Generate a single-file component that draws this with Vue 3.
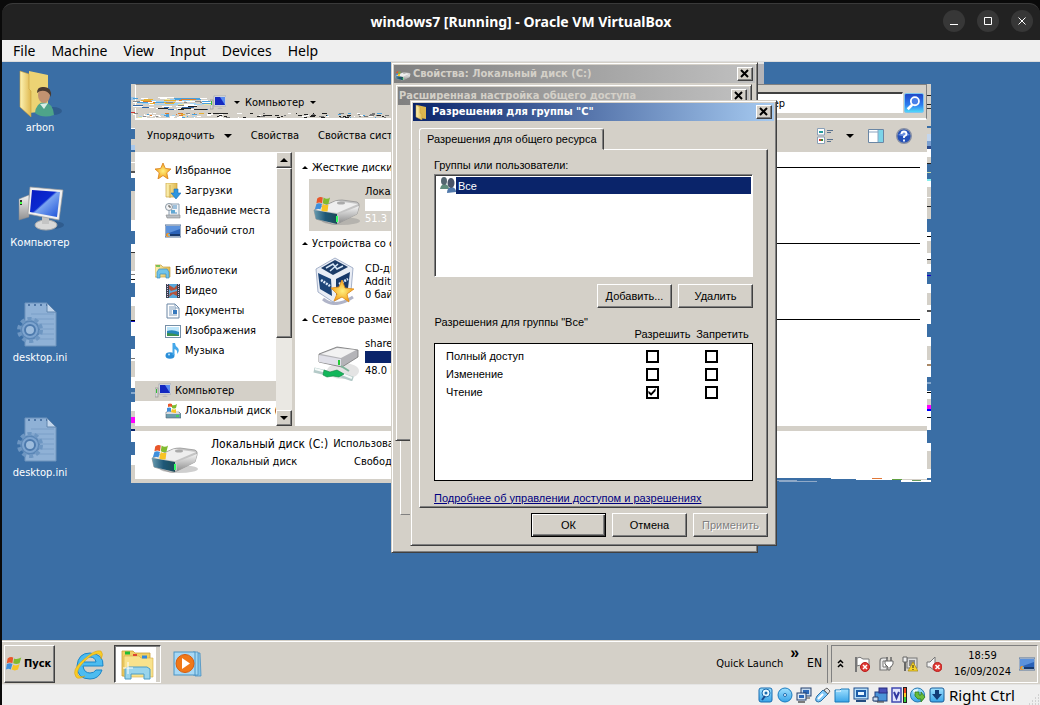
<script setup>
import { ref } from 'vue'

const menus = ['File', 'Machine', 'View', 'Input', 'Devices', 'Help']

const shortcuts = [
  { icon: 'user-folder', label: 'arbon' },
  { icon: 'computer', label: 'Компьютер' },
  { icon: 'ini', label: 'desktop.ini' },
  { icon: 'ini', label: 'desktop.ini' },
]

const nav = [
  { title: 'Избранное', icon: 'star', items: [
    { icon: 'downloads', label: 'Загрузки' },
    { icon: 'recent', label: 'Недавние места' },
    { icon: 'desk', label: 'Рабочий стол' },
  ] },
  { title: 'Библиотеки', icon: 'library', items: [
    { icon: 'video', label: 'Видео' },
    { icon: 'doc', label: 'Документы' },
    { icon: 'image', label: 'Изображения' },
    { icon: 'music', label: 'Музыка' },
  ] },
  { title: 'Компьютер', icon: 'pc-small', active: true, items: [
    { icon: 'drive-small', label: 'Локальный диск (' },
  ] },
]

const groups = [
  { title: 'Жесткие диски', icon: 'drive-win', selected: true, name: 'Локальный диск', bar: 'empty', info: '51.3 ГБ' },
  { title: 'Устройства со съемными носителями', icon: 'vbox', name: 'CD-дисковод', extra: 'Additions', info: '0 байт' },
  { title: 'Сетевое размещение', icon: 'drive-net', name: 'share', bar: 'full', info: '48.0 ГБ' },
]

const permissions = ref([
  { name: 'Полный доступ', allow: false, deny: false },
  { name: 'Изменение', allow: false, deny: false },
  { name: 'Чтение', allow: true, deny: false },
])

const indicators = ['hdd', 'cd', 'net', 'usb', 'shared', 'display', 'record', 'cpu', 'mouse', 'key']
const tray = ['flag', 'plug', 'network', 'sound']

// Repaint artefacts along the window edges: [top, height, colour]
const G = '#d4d0c8'
const W = '#fff'
const B = '#3a6ea5'
const leftEdge = [
  [0, 13, G], [13, 3, '#9cc4e4'], [16, 12, G], [28, 1, '#c33'], [29, 15, G], [44, 1, W], [45, 10, B], [55, 6, G], [61, 5, '#a8c8ec'],
  [66, 2, B], [68, 10, G], [78, 1, W], [79, 8, G], [87, 2, '#555'], [89, 5, W], [94, 13, B], [107, 29, G], [136, 11, W], [147, 13, B],
  [160, 8, W], [168, 1, '#333'], [169, 18, G], [187, 3, W], [190, 1, '#777'], [191, 4, W], [195, 1, '#111'], [196, 3, W],
  [199, 14, B], [213, 9, W], [222, 14, G], [236, 1, '#000'], [237, 1, '#1010c0'], [238, 14, W], [252, 13, B], [265, 9, W],
  [274, 1, '#777'], [275, 2, W], [277, 16, G], [293, 11, W], [304, 4, B], [308, 2, '#86a8cc'], [310, 8, B], [318, 9, W], [327, 6, G],
  [333, 6, '#f0f'], [339, 6, G], [345, 2, '#0a246a'], [347, 11, W], [358, 13, B], [371, 10, W], [381, 18, G],
]
const rightEdge = [
  [0, 11, G], [11, 1, '#222'], [12, 8, G], [20, 1, '#222'], [21, 3, G], [24, 1, '#333'], [25, 17, G], [42, 2, B], [44, 6, G],
  [50, 7, '#c3d6ee'], [57, 5, '#7a9fd0'], [62, 3, '#2a4a8c'], [65, 8, W], [73, 6, G], [79, 1, '#222'], [80, 8, B], [88, 1, '#cda'],
  [89, 6, B], [95, 2, '#8ee'], [97, 6, W], [103, 10, G], [113, 1, W], [114, 8, G], [122, 1, '#222'], [123, 12, G], [135, 13, B],
  [148, 4, W], [152, 1, '#000'], [153, 4, W], [157, 12, G], [169, 6, W], [175, 1, '#222'], [176, 4, G], [180, 8, W], [188, 3, B],
  [191, 1, '#10c'], [192, 8, B], [200, 9, W], [209, 12, G], [221, 5, W], [226, 2, '#555'], [228, 12, W], [240, 13, B],
  [253, 9, W], [262, 14, G], [276, 4, W], [280, 2, '#a86'], [282, 11, W], [293, 5, B], [298, 2, '#86a8cc'], [300, 7, B], [307, 1, W],
  [308, 1, '#000'], [309, 6, W], [315, 6, G], [321, 4, '#f0f'], [325, 2, '#00f'], [327, 6, W], [333, 1, '#000'], [334, 12, W],
  [346, 13, B], [359, 8, W], [367, 2, G], [369, 16, G], [385, 14, W],
]

// Torn scan lines over the address bar
const palette = ['#ffffff', '#4aa0dc', '#9fd2f2', '#ffffff', '#e8b030', '#d4d0c8', '#9fd2f2', '#ffffff', '#e07c28', '#8a8a8a', '#ffffff', '#f0e8a0']
let seed = 11
const rnd = (n) => {
  seed = (seed * 1103515245 + 12345) % 2147483648
  return Math.floor(seed / 65536) % n
}
const torn = []
for (let y = 13; y < 25; y += 1) {
  let x = 0
  while (x < 74) {
    const w = 2 + rnd(11)
    const c = y > 20 ? ['#222', G, '#2f66a8', '#fff'][rnd(4)] : palette[rnd(12)]
    if (rnd(5) > 0) torn.push({ x, y: y + Math.floor(x / 34), w: Math.min(w, 78 - x), c })
    x += w
  }
}
for (let y = 29; y < 34; y += 1) {
  let x = 0
  while (x < 254) {
    const w = 1 + rnd(5)
    const c = x < 70 ? palette[rnd(12)] : ['#222', '#fff', G, '#777', x > 190 ? '#4aa0dc' : '#222', G][rnd(6)]
    if (rnd(3) > 0) torn.push({ x, y, w, c })
    x += w + rnd(5)
  }
}
</script>

<template>
  <svg class="defs" aria-hidden="true">
    <defs>
      <linearGradient id="gFolder" x1="0" x2="1"><stop offset="0" stop-color="#fdf3b4" /><stop offset="1" stop-color="#dfb84f" /></linearGradient>
      <linearGradient id="gScreen" x1="0" y1="0" x2="1" y2="1"><stop offset="0" stop-color="#0a1cc0" /><stop offset=".45" stop-color="#0a2ad0" /><stop offset=".5" stop-color="#7aa4f0" /><stop offset="1" stop-color="#1a50d8" /></linearGradient>
      <linearGradient id="gMetal" x1="0" y1="0" x2="0" y2="1"><stop offset="0" stop-color="#f4f4f4" /><stop offset="1" stop-color="#909090" /></linearGradient>
      <linearGradient id="gSky" x1="0" y1="0" x2="0" y2="1"><stop offset="0" stop-color="#9fe0ff" /><stop offset="1" stop-color="#38a4e8" /></linearGradient>
      <linearGradient id="gTeal" x1="0" x2="1"><stop offset="0" stop-color="#6a9cb0" /><stop offset=".5" stop-color="#1f5878" /><stop offset="1" stop-color="#1c4c58" /></linearGradient>
      <radialGradient id="gStar"><stop offset="0" stop-color="#fff080" /><stop offset="1" stop-color="#f4a018" /></radialGradient>
    </defs>
    <symbol id="winflag" viewBox="0 0 20 20">
      <path d="M2 3Q6 0 9 2L8 9Q5 7 1 9Z" fill="#e8562a" /><path d="M10 3Q14 5 19 2L17 9Q13 11 9 9Z" fill="#80bb30" />
      <path d="M1 10Q5 8 8 10L6 17Q3 15 0 17Z" fill="#3f8fdc" /><path d="M9 11Q13 13 17 10L15 17Q11 19 7 17Z" fill="#f8c424" />
    </symbol>
    <symbol id="user-folder" viewBox="0 0 48 48">
      <ellipse cx="37" cy="42" rx="9" ry="4" fill="#234a78" opacity=".5" />
      <path d="M13 2L32 6V42L13 44Z" fill="#ecd374" /><path d="M4 2L13 5V20L15 22V48L4 38Z" fill="url(#gFolder)" stroke="#c8a040" stroke-width=".6" />
      <path d="M19 44Q20 34 28 33Q37 34 38 46Q27 50 19 44Z" fill="#4ea489" /><path d="M24 35L28 40L32 34" fill="#d8efe6" />
      <ellipse cx="28" cy="26" rx="6" ry="8" fill="#c29270" /><path d="M21 24Q21 17 28 18Q36 18 35 28Q33 23 29 22Q24 21 21 24Z" fill="#4a3a30" />
    </symbol>
    <symbol id="computer" viewBox="0 0 48 48">
      <ellipse cx="36" cy="41" rx="12" ry="4" fill="#234a78" opacity=".5" />
      <path d="M3 15L13 11V33L3 36Z" fill="url(#gMetal)" stroke="#888" stroke-width=".5" /><rect x="4" y="16" width="2" height="5" fill="#333" /><rect x="4" y="18" width="2" height="2" fill="#4f4" />
      <ellipse cx="30" cy="41" rx="11" ry="5" fill="#d8d8d8" stroke="#aaa" /><path d="M26 31H33V40H26Z" fill="#c4c4c4" />
      <path d="M14 3L47 6L43 36L12 30Z" fill="#f0f0f0" stroke="#999" stroke-width=".7" /><path d="M16 6L44 8L41 33L14 28Z" fill="url(#gScreen)" />
    </symbol>
    <symbol id="ini" viewBox="0 0 48 48">
      <path d="M9 4H31L40 13V47H9Z" fill="#8fb1d6" stroke="#6f94bd" /><path d="M31 4V13H40Z" fill="#c2d6ec" stroke="#5f84ad" />
      <path d="M15 15H38M15 20H38M15 25H38M15 30H38M15 35H38M15 40H38" stroke="#7a9fc8" /><path d="M12 6H31" stroke="#4e76a6" stroke-width="2" stroke-dasharray="2 4" />
      <circle cx="14" cy="31" r="9" fill="#7da4cf" stroke="#5a86b6" stroke-width="2" /><circle cx="14" cy="31" r="11" fill="none" stroke="#6d96c2" stroke-width="4" stroke-dasharray="4 3" />
      <circle cx="14" cy="31" r="5" fill="#9dbcdd" stroke="#4d7aad" stroke-width="2" />
    </symbol>
    <symbol id="star" viewBox="0 0 16 16"><path d="M8 0L10.3 5.4L16 6L11.8 9.8L13 16L8 12.5L3 16L4.2 9.8L0 6L5.7 5.4Z" fill="url(#gStar)" stroke="#d8801c" stroke-width=".8" /></symbol>
    <symbol id="downloads" viewBox="0 0 16 16"><path d="M1 0H12V14H1Z" fill="url(#gFolder)" stroke="#c8a040" stroke-width=".7" /><path d="M5 2V15" stroke="#cda84a" /><path d="M9 6H13V10H16L11 16L6 10H9Z" fill="#2d96e0" stroke="#1c70b8" stroke-width=".6" /></symbol>
    <symbol id="recent" viewBox="0 0 16 16"><path d="M4 1H14V13H4Z" fill="#f2f5f8" stroke="#8ca0b2" /><path d="M1 12H15V15H2Z" fill="#b8bec4" stroke="#888" stroke-width=".6" /><path d="M8 3H12M8 5H12M6 10H12" stroke="#4a8cc0" /><rect x="6" y="7" width="4" height="3" fill="#5fa8d4" /><circle cx="4" cy="4" r="3.5" fill="#f4f4f4" stroke="#8a98a4" /><path d="M4 2V4H6" stroke="#555" fill="none" /></symbol>
    <symbol id="desk" viewBox="0 0 16 16"><rect y="2" width="16" height="12" fill="#e0e6ee" stroke="#56749c" /><rect x="1" y="3" width="14" height="10" fill="#2a62b8" /><path d="M1 3H15V6L1 11Z" fill="#5c92dc" /><rect x="1" y="11" width="14" height="2" fill="#17396e" /><circle cx="3" cy="12" r="2" fill="#f39a2c" /><circle cx="4" cy="12" r="1" fill="#5cb8ff" /></symbol>
    <symbol id="library" viewBox="0 0 16 16"><path d="M0 2H6L8 4H15V14H0Z" fill="url(#gFolder)" stroke="#c8a040" stroke-width=".7" /><path d="M1 3H5" stroke="#5b4" stroke-width="1.5" /><path d="M2 9L4 6H12L14 9V15H11V11H5V15H2Z" fill="#71c3ea" stroke="#3c8dbc" stroke-width=".7" /></symbol>
    <symbol id="video" viewBox="0 0 16 16"><rect x="1" y="1" width="14" height="14" fill="#3a4450" /><rect x="4" y="1" width="8" height="14" fill="#58a8dc" /><path d="M4 2L9 5L12 2V6L6 8L4 6ZM5 10L12 8V13L8 11L4 14Z" fill="#b4533c" /><path d="M2.5 1V15M13.5 1V15" stroke="#dbe" stroke-dasharray="1 1" /></symbol>
    <symbol id="doc" viewBox="0 0 16 16"><path d="M2 1H10L14 5V15H2Z" fill="#fff" stroke="#6a86a4" /><path d="M10 1V5H14M4 4H9M4 6H11M4 8H7M4 10H7M4 12H12" stroke="#7e9cba" fill="none" /><rect x="8" y="7" width="4" height="4" fill="#3679bd" /></symbol>
    <symbol id="image" viewBox="0 0 16 16"><rect x=".5" y="2.5" width="15" height="12" fill="#fff" stroke="#7690a8" /><rect x="2" y="4" width="12" height="9" fill="#bfe6fa" /><path d="M2 8Q8 6 14 9V13H2Z" fill="#2686bc" /><path d="M2 10Q7 10 14 12V13H2Z" fill="#3d9250" /></symbol>
    <symbol id="music" viewBox="0 0 16 16"><ellipse cx="5" cy="12.5" rx="4.5" ry="3.3" fill="#2a8ed8" /><path d="M7.500 12V0H10Q10 3 13 5Q15 8 12 11Q13 7 9.500 6V12Z" fill="#45a8ea" /><circle cx="4" cy="11.500" r="1" fill="#bfe4fa" /></symbol>
    <symbol id="pc-small" viewBox="0 0 16 16"><rect y="5" width="3" height="9" fill="#d8d8d8" stroke="#888" stroke-width=".6" /><rect x="1" y="6" width="1" height="4" fill="#3b3" /><rect x="4" y="1" width="12" height="10" fill="#e8eaee" stroke="#9098a4" stroke-width=".6" /><rect x="5" y="2" width="10" height="8" fill="#1428c0" /><path d="M10 2H15V10Z" fill="#5a8cf0" /><path d="M7 14Q10 11 13 14Z" fill="#b8b8b8" /></symbol>
    <symbol id="drive-small" viewBox="0 0 16 16"><path d="M1 9H14L16 11V15H1Z" fill="#6c9cac" stroke="#567" stroke-width=".6" /><path d="M2 8H13L15 11H1Z" fill="#dcdcdc" /><rect x="11" y="12" width="3" height="2" fill="#4c6" /><path d="M3 1Q5 0 7 1V4Q5 3 3 4Z" fill="#e8562a" /><path d="M7 2Q9 3 12 1L11 5Q9 6 7 5Z" fill="#80bb30" /><path d="M2 5Q4 4 6 5V9Q4 8 2 9Z" fill="#3f8fdc" /><path d="M7 6Q9 7 11 6V10Q9 10 6 9Z" fill="#f8c424" /></symbol>
    <symbol id="drive-win" viewBox="0 0 48 48">
      <ellipse cx="28" cy="40" rx="19" ry="4" fill="#888" opacity=".4" />
      <path d="M1 29L22 20Q25 19 29 19L44 21Q47 22 46 26L44 33L26 42Q23 44 19 43L3 38Z" fill="#c4c4c4" stroke="#8c8c8c" stroke-width=".7" />
      <path d="M3 29L23 20L45 23L24 32Z" fill="#eeeeee" /><path d="M1 29L24 33V43L3 38Z" fill="url(#gTeal)" /><path d="M26 33L46 25L44 33L26 42Z" fill="url(#gMetal)" />
      <rect x="23" y="35" width="2" height="6" fill="#3f6" /><ellipse cx="28" cy="22" rx="4" ry="1.500" fill="#aaa" />
      <g transform="translate(1 7) scale(.8)"><path d="M4 13Q8 10 11 12L10 19Q7 17 3 19Z" fill="#e8562a" /><path d="M12 12Q16 15 20 12L18 20Q14 21 11 19Z" fill="#80bb30" /><path d="M3 20Q6 18 10 20L8 27Q5 25 1 27Z" fill="#3f8fdc" /><path d="M11 20Q14 22 18 21L17 29Q12 30 9 28Z" fill="#f8c424" /></g>
    </symbol>
    <symbol id="drive-net" viewBox="0 0 48 48">
      <ellipse cx="30" cy="38" rx="16" ry="8" fill="#e4e4e4" /><path d="M6 21L24 14L45 17V24L29 34L6 29Z" fill="#b4b4b8" stroke="#777" stroke-width=".8" /><path d="M8 21L24 15L43 17L28 25Z" fill="#f2f2f2" /><path d="M6 22L28 26V33L6 29Z" fill="#e0e0e8" /><rect x="25" y="27" width="2" height="5" fill="#2c3" />
      <path d="M28 33L36 38" stroke="#7eb49a" stroke-width="2" /><path d="M1 37L14 40M28 42L40 46" stroke="#b4cac8" stroke-width="5" /><path d="M2 36L14 39M29 41L39 45" stroke="#f6fbfa" stroke-width="2" /><path d="M11 37L17 39L24 37L31 41L26 44L20 43L14 44L10 42Z" fill="#12b65a" stroke="#0b8440" stroke-width=".6" />
    </symbol>
    <symbol id="vbox" viewBox="0 0 48 48">
      <path d="M10 42Q22 52 40 40" fill="none" stroke="#b0b4c8" stroke-width="3" />
      <path d="M3 12L22 1L40 11L38 34L20 45L5 35Z" fill="#e9edf5" stroke="#90a0bc" stroke-width=".8" />
      <path d="M8 11L22 3L35 10L20 18Z" fill="#1c3c68" /><path d="M5 16L18 22L19 39L7 32Z" fill="#1c4478" /><path d="M23 22L37 15L35 31L23 38Z" fill="#17396a" />
      <path d="M13 11L20 7L24 12L30 9M17 14L25 7" fill="none" stroke="#d6e6f6" stroke-width="1.500" /><path d="M8 23L17 29M26 27L35 22" stroke="#dde9f8" stroke-width="2.500" stroke-dasharray="2 1" />
      <path d="M29 23L32 31L41 32L34 37L36 45L29 40L21 44L24 37L18 31L26 30Z" fill="url(#gStar)" stroke="#e08c1c" stroke-width=".8" />
    </symbol>
    <symbol id="folder" viewBox="0 0 16 16"><path d="M3 1L12 3V15L6 14Z" fill="#ddb64e" /><path d="M2 1L6 3V9L8 10V16L2 13Z" fill="url(#gFolder)" stroke="#c8a040" stroke-width=".5" /></symbol>
    <symbol id="users" viewBox="0 0 16 16"><path d="M0 12Q1 7 5 7Q9 8 9 12Z" fill="#5f8c7c" /><ellipse cx="4" cy="4" rx="3" ry="4" fill="#536670" /><path d="M7 16Q7 10 12 10Q16 11 16 15Z" fill="#5078aa" /><ellipse cx="11" cy="6" rx="3.500" ry="5" fill="#485468" /></symbol>
    <symbol id="view" viewBox="0 0 16 16"><path d="M.5.5H7.500V7H.5ZM.5 9H7.500V15.500H.5Z" fill="#fff" stroke="#8aa0b8" /><rect x="2" y="3" width="4" height="2" fill="#249c9c" /><rect x="2" y="11" width="2" height="2" fill="#d33" /><rect x="4" y="11" width="2" height="2" fill="#383" /><path d="M10 2.500H16M10 4.500H14M10 11.500H16M10 13.500H14" stroke="#5a728e" /></symbol>
    <symbol id="pane" viewBox="0 0 16 16"><path d="M.5 1.500H15.500V14.500H.5Z" fill="#fff" stroke="#6a86a4" /><rect x="10" y="2" width="5" height="12" fill="#7cd4e8" /><path d="M10 2V14M1 4H10" stroke="#8aa4c0" /></symbol>
    <symbol id="help" viewBox="0 0 16 16"><circle cx="8" cy="8" r="7.300" fill="#2450b8" stroke="#8890a4" stroke-width="1.400" /><path d="M2 7Q8 1 14 7Q8 9 2 7Z" fill="#6c90e0" /><path d="M5.500 6Q5.500 3.500 8 3.500Q10.500 3.500 10.500 6Q10.500 7.500 8 8.500V10M8 11.500V13.500" fill="none" stroke="#fff" stroke-width="1.800" /></symbol>
    <symbol id="ie" viewBox="0 0 32 32"><path d="M30 18H10Q11 25 17 25Q21 25 23 22H29Q26 31 17 31Q4 31 4 18Q5 5 17 5Q31 6 30 18ZM11 14H23Q22 9 17 9Q12 9 11 14Z" fill="#4cbcf0" stroke="#1b86c8" /><path d="M3 29Q-2 22 10 12Q22 1 28 3Q31 6 28 11Q28 5 23 6Q17 7 9 16Q3 23 5 27Q7 30 12 28Q5 32 3 29Z" fill="#f8cc24" stroke="#d89c10" stroke-width=".5" /></symbol>
    <symbol id="explorer" viewBox="0 0 36 32"><path d="M2 3H13L15 5H30V28H2Z" fill="#f0cf64" stroke="#caa038" stroke-width=".8" /><path d="M5 5H10" stroke="#2b3" stroke-width="3" /><path d="M4 8H19L21 10H33V29H4Z" fill="#f8e28c" stroke="#d4ac48" stroke-width=".6" /><path d="M13 7H17" stroke="#d43" stroke-width="2" /><path d="M22 9H27" stroke="#38d" stroke-width="3" /><path d="M5 31V21L8 19H27L30 21V31H24V26H11V31H5Z" fill="#98d4ec" stroke="#4c9cc4" /><path d="M8 14V26M3 20H13" stroke="#fff" /></symbol>
    <symbol id="wmp" viewBox="0 0 32 28"><path d="M23 3H27L28 26H22Z" fill="#84c4e8" stroke="#4b90c0" stroke-width=".8" /><path d="M20 2H25V25H20Z" fill="#a4d8f2" stroke="#4b90c0" stroke-width=".8" /><rect x="1" y="2" width="21" height="23" fill="#a8d8f4" stroke="#4b94c4" /><circle cx="12" cy="13.500" r="9" fill="#f07818" stroke="#d85c0c" /><path d="M9 8L17 13.500L9 19Z" fill="#fff" /></symbol>
    <symbol id="flag" viewBox="0 0 16 16"><path d="M2 1V16" stroke="#777" stroke-width="2" /><path d="M3 2Q6 0 9 3H15V11H8Q5 8 3 10Z" fill="#fff" stroke="#777" /><circle cx="11" cy="11" r="4.500" fill="#e03a34" stroke="#b81c1c" /><path d="M9 9L13 13M13 9L9 13" stroke="#fff" stroke-width="1.500" /></symbol>
    <symbol id="plug" viewBox="0 0 16 16"><path d="M10 2H5Q2 2 2 5V14H9V10" fill="#e8e8e8" stroke="#777" stroke-width="1.200" /><path d="M5 5H8V11H5Z" fill="#fff" stroke="#777" /><path d="M7 5H15V8L13 11H12V14H10V11L7 8Z" fill="#fff" stroke="#666" /><path d="M9 1V5M13 1V5" stroke="#666" stroke-width="1.500" /></symbol>
    <symbol id="network" viewBox="0 0 16 16"><rect x="5" y="2" width="10" height="10" fill="#ddd" stroke="#777" /><rect x="7" y="4" width="6" height="6" fill="#888" /><path d="M1 1V6H5V1Z" fill="#eee" stroke="#666" /><path d="M3 6V15" stroke="#666" stroke-width="2" /><path d="M11 6L16 15H6Z" fill="#f8d428" stroke="#a88810" stroke-width=".7" /><path d="M11 9V12M11 13V14" stroke="#222" /></symbol>
    <symbol id="sound" viewBox="0 0 16 16"><path d="M1 6H4L9 1V15L4 11H1Z" fill="#f4f4f4" stroke="#777" /><circle cx="11.500" cy="11" r="4.500" fill="#e03a34" stroke="#b81c1c" /><path d="M9.500 9L13.500 13M13.500 9L9.500 13" stroke="#fff" stroke-width="1.500" /></symbol>
    <symbol id="hdd" viewBox="0 0 16 16"><rect x="1" y="1" width="13" height="14" rx="2" fill="url(#gSky)" stroke="#1a6cb0" /><circle cx="8" cy="6" r="4" fill="#e8f8ff" stroke="#1a6cb0" /><circle cx="8" cy="6" r="1.500" fill="#1a6cb0" /><path d="M4 13L7 9" stroke="#1a4c90" stroke-width="2" /></symbol>
    <symbol id="cd" viewBox="0 0 16 16"><circle cx="8" cy="8" r="7" fill="url(#gSky)" stroke="#1a7cc0" /><circle cx="8" cy="8" r="1.500" fill="#fff" stroke="#1a6cb0" /></symbol>
    <symbol id="net" viewBox="0 0 16 16"><rect x="5" y="1" width="10" height="8" fill="#c8dcf0" stroke="#26406c" /><rect x="7" y="3" width="6" height="4" fill="#2c68b8" /><path d="M9 11H14" stroke="#444" /><rect x="1" y="6" width="9" height="7" fill="#dceaf8" stroke="#26406c" /><rect x="3" y="8" width="5" height="3" fill="#2c68b8" /><path d="M2 15H9" stroke="#555" stroke-width="1.500" /></symbol>
    <symbol id="usb" viewBox="0 0 16 16"><path d="M2 9L8 3L13 7L6 14Q3 16 1 14Q0 12 2 9Z" fill="#80c8f8" stroke="#2a70a8" /><path d="M9 3L12 1L15 4L13 7Z" fill="#e4e4e4" stroke="#666" /><path d="M3 12L8 7" stroke="#fff" stroke-width="2" /></symbol>
    <symbol id="shared" viewBox="0 0 16 16"><path d="M1 3H6L7 2H15V15H1Z" fill="url(#gSky)" stroke="#1a78b8" /><path d="M2 4H7" stroke="#fff" /></symbol>
    <symbol id="display" viewBox="0 0 16 16"><rect x="1" y="1" width="14" height="11" fill="#b8e0fa" stroke="#1c4c8c" /><rect x="4" y="4" width="8" height="5" fill="#e8f6ff" stroke="#1c5ca8" stroke-width="2" /><path d="M3 14H13" stroke="#244c80" stroke-width="2" /></symbol>
    <symbol id="record" viewBox="0 0 16 16"><rect x="3" y="5" width="12" height="9" fill="#4a94d8" stroke="#1c3c80" /><rect x="7" y="1" width="8" height="5" fill="#4850b8" stroke="#282c80" /><path d="M1 10H6V14H1Z" fill="#c8dcf0" stroke="#26406c" /><path d="M5 15H12" stroke="#333" /></symbol>
    <symbol id="cpu" viewBox="0 0 16 16"><rect x="1" y="1" width="9" height="14" fill="#e0e4fc" stroke="#4048b0" stroke-width="1.500" /><path d="M3 5L5.500 11L8 5" fill="none" stroke="#3038a0" stroke-width="2" /><rect x="12" width="4" height="16" fill="#222" /><rect x="13" y="1" width="2" height="5" fill="#e42" /><rect x="13" y="6" width="2" height="4" fill="#fc2" /><rect x="13" y="10" width="2" height="5" fill="#3c3" /></symbol>
    <symbol id="mouse" viewBox="0 0 16 16"><circle cx="7.500" cy="8" r="7" fill="url(#gSky)" stroke="#2a78b0" /><path d="M3 3L8 2L7 6L4 7Z" fill="#eaf8ff" /><path d="M5 5H9V8H11V5L15 10L11 15V12H8L5 9Z" fill="#68bc3c" stroke="#2f7c1c" stroke-width=".8" /></symbol>
    <symbol id="key" viewBox="0 0 16 16"><rect x="1" y="1" width="14" height="14" rx="2" fill="url(#gSky)" stroke="#1a5c98" /><path d="M6 3H10V7H13L8 13L3 7H6Z" fill="#123c78" /></symbol>
  </svg>

  <div class="host">
    <header class="titlebar">
      <h1>windows7 [Running] - Oracle VM VirtualBox</h1>
      <div class="winctl">
        <button aria-label="Minimize"><svg viewBox="0 0 22 22"><path d="M7 14.500H15" /></svg></button>
        <button aria-label="Maximize"><svg viewBox="0 0 22 22"><path d="M7.500 7.500H14.500V14.500H7.500Z" /></svg></button>
        <button aria-label="Close"><svg viewBox="0 0 22 22"><path d="M7.500 7.500L14.500 14.500M14.500 7.500L7.500 14.500" /></svg></button>
      </div>
    </header>
    <nav class="menubar"><button v-for="m in menus" :key="m">{{ m }}</button></nav>

    <main class="guest">
      <section class="desktop">
        <ul class="shortcuts">
          <li v-for="(s, i) in shortcuts" :key="i"><svg><use :href="'#' + s.icon" /></svg><span>{{ s.label }}</span></li>
        </ul>

        <div class="remnant"></div>

        <section class="explorer" aria-label="Компьютер">
          <svg class="edge" aria-hidden="true"><rect v-for="(r, i) in leftEdge" :key="i" width="4" :y="r[0]" :height="r[1]" :fill="r[2]" /></svg>
          <div class="frame">
            <div class="address">
              <svg class="i16"><use href="#pc-small" /></svg>
              <i class="down small"></i>
              <span>Компьютер</span>
              <i class="down small"></i>
              <input aria-label="Поиск" value="Поиск: Компьютер">
              <button class="search" aria-label="Найти"><svg viewBox="0 0 20 20"><path d="M3 17L8 12" stroke="#fff" stroke-width="3" /><circle cx="11" cy="8" r="4.500" fill="#4a80e8" stroke="#fff" stroke-width="2" /></svg></button>
            </div>
            <div class="commands">
              <button>Упорядочить <i class="down"></i></button>
              <button>Свойства</button>
              <button>Свойства системы</button>
              <span class="right">
                <button aria-label="Вид"><svg class="i16"><use href="#view" /></svg><i class="down"></i></button>
                <button aria-label="Область просмотра"><svg class="i16"><use href="#pane" /></svg></button>
                <button aria-label="Справка"><svg class="i16"><use href="#help" /></svg></button>
              </span>
            </div>
            <div class="body">
              <nav class="tree">
                <ul v-for="g in nav" :key="g.title">
                  <li :class="{ active: g.active }"><svg class="i16"><use :href="'#' + g.icon" /></svg>{{ g.title }}</li>
                  <li v-for="n in g.items" :key="n.label" class="child"><svg class="i16"><use :href="'#' + n.icon" /></svg>{{ n.label }}</li>
                </ul>
              </nav>
              <div class="scroll"><button aria-label="Вверх"><i class="down up"></i></button><div class="thumb"></div><div class="track"></div><button aria-label="Вниз"><i class="down"></i></button></div>
              <div class="files">
                <section v-for="g in groups" :key="g.title">
                  <h2><i class="down up small"></i>{{ g.title }}</h2>
                  <div class="item" :class="{ selected: g.selected }">
                    <svg><use :href="'#' + g.icon" /></svg>
                    <div>
                      <p>{{ g.name }}</p>
                      <p v-if="g.extra">{{ g.extra }}</p>
                      <div v-else class="bar" :class="g.bar"></div>
                      <p class="info">{{ g.info }}</p>
                    </div>
                  </div>
                </section>
              </div>
            </div>
            <div class="details">
              <svg><use href="#drive-win" /></svg>
              <div>
                <p><b>Локальный диск (C:)</b><span>Использовано:</span></p>
                <p><span class="kind">Локальный диск</span><span>Свободно:</span></p>
              </div>
            </div>
          </div>
          <svg class="edge" aria-hidden="true"><rect v-for="(r, i) in rightEdge" :key="i" width="4" :y="r[0]" :height="r[1]" :fill="r[2]" /></svg>
          <svg class="torn" aria-hidden="true"><rect v-for="(t, i) in torn" :key="i" :x="t.x" :y="t.y" :width="t.w" height="1" :fill="t.c" /></svg>
          <svg class="torn-bottom" aria-hidden="true"><path d="M0 0H60V1H130V2H156V0H160V5H0Z" fill="#3a6ea5" /><path d="M60 0H156V1H130V2H160V4H130V2H85V1H60Z" fill="#fff" /><path d="M2 2.500H26M8 3.500H46" stroke="#8fa9c8" /><path d="M101 .5H111" stroke="#e07838" /><path d="M121 1.500H131" stroke="#60a040" /><path d="M141 2.500H150" stroke="#6a9c60" /></svg>
        </section>

        <section class="dialog props">
          <header class="caption off"><svg class="i16"><use href="#drive-win" /></svg><h2>Свойства: Локальный диск (C:)</h2><button aria-label="Закрыть"><svg viewBox="0 0 12 10"><path d="M2 1L9 8M9 1L2 8" /></svg></button></header>
          <div class="sheet"></div>
        </section>

        <section class="dialog advanced">
          <header class="caption off"><h2>Расширенная настройка общего доступа</h2><button aria-label="Закрыть"><svg viewBox="0 0 12 10"><path d="M2 1L9 8M9 1L2 8" /></svg></button></header>
        </section>

        <section class="dialog perms">
          <header class="caption"><svg class="i16"><use href="#folder" /></svg><h2>Разрешения для группы "C"</h2><button aria-label="Закрыть"><svg viewBox="0 0 12 10"><path d="M2 1L9 8M9 1L2 8" /></svg></button></header>
          <div class="content">
            <button class="tab">Разрешения для общего ресурса</button>
            <div class="page">
              <label id="groups-label">Группы или пользователи:</label>
              <ul class="listbox" role="listbox" aria-labelledby="groups-label">
                <li role="option" aria-selected="true"><svg class="i16"><use href="#users" /></svg><span>Все</span></li>
              </ul>
              <div class="actions"><button class="btn">Добавить...</button><button class="btn">Удалить</button></div>
              <table>
                <thead><tr><th class="name">Разрешения для группы "Все"</th><th>Разрешить</th><th>Запретить</th></tr></thead>
                <tbody>
                  <tr v-for="p in permissions" :key="p.name">
                    <td class="name">{{ p.name }}</td>
                    <td><input v-model="p.allow" type="checkbox" :aria-label="p.name + ': Разрешить'"></td>
                    <td><input v-model="p.deny" type="checkbox" :aria-label="p.name + ': Запретить'"></td>
                  </tr>
                  <tr class="fill"><td colspan="3"></td></tr>
                </tbody>
              </table>
              <a href="#">Подробнее об управлении доступом и разрешениях</a>
            </div>
            <div class="actions bottom"><button class="btn default">ОК</button><button class="btn">Отмена</button><button class="btn" disabled>Применить</button></div>
          </div>
        </section>
      </section>

      <footer class="taskbar">
        <button class="start"><svg class="i16"><use href="#winflag" /></svg>Пуск</button>
        <button class="app" aria-label="Internet Explorer"><svg class="ie"><use href="#ie" /></svg></button>
        <button class="app pressed" aria-label="Проводник"><svg class="ex"><use href="#explorer" /></svg></button>
        <button class="app" aria-label="Windows Media Player"><svg class="wmp"><use href="#wmp" /></svg></button>
        <span class="quick">Quick Launch</span>
        <span class="more">»</span>
        <span class="lang">EN</span>
        <div class="tray">
          <svg class="chev" viewBox="0 0 7 10"><path d="M1 4L3.500 1.500L6 4M1 8L3.500 5.500L6 8" fill="none" stroke="#000" stroke-width="1.500" /></svg>
          <svg v-for="t in tray" :key="t" class="i16"><use :href="'#' + t" /></svg>
          <time>18:59<br>16/09/2024</time>
          <svg class="i16"><use href="#desk" /></svg>
        </div>
      </footer>
    </main>

    <footer class="status">
      <svg v-for="n in indicators" :key="n" class="i16"><use :href="'#' + n" /></svg>
      <span>Right Ctrl</span>
      <svg class="grip" viewBox="0 0 12 12"><path d="M1 11H12M4 8H12M7 5H12M10 2H12" stroke="#b4b4b4" stroke-dasharray="1 2" /></svg>
    </footer>
  </div>
</template>

<style>
html, body { margin: 0; background: #000; }
</style>

<style scoped>
* { box-sizing: border-box; }
h1, h2, p, ul { margin: 0; padding: 0; list-style: none; font-size: inherit; font-weight: inherit; }
button { font: inherit; color: inherit; background: none; border: 0; padding: 0; }
svg { display: block; flex: none; }
.defs { position: absolute; width: 0; height: 0; }
.i16 { width: 16px; height: 16px; }
.host { display: flex; flex-direction: column; min-height: 100vh; border-left: 2px solid #0a0a0a; background: #0a0a0a; overflow: hidden; font-family: "DejaVu Sans Condensed", "DejaVu Sans", sans-serif; font-size: 11px; line-height: 14px; color: #000; }
.titlebar { position: relative; display: flex; align-items: center; justify-content: center; height: 37px; margin-top: 3px; background: #222; border-top: 1px solid #3a3a3a; border-radius: 11px 11px 0 0; color: #fff; font: bold 14px/20px "Noto Sans", sans-serif; }
.winctl { position: absolute; right: 7px; top: 6px; display: flex; gap: 12px; }
.winctl button { width: 22px; height: 22px; border-radius: 11px; background: #373737; }
.winctl path { fill: none; stroke: #fff; stroke-width: 1; }
.menubar { display: flex; align-items: center; gap: 16px; height: 22px; padding-left: 11px; background: #efefef; border-bottom: 1px solid #dcdcdc; font: 14px/20px "Noto Sans", sans-serif; }
.guest { flex: 1; display: flex; flex-direction: column; }
.desktop { position: relative; flex: 1; background: #3a6ea5; overflow: hidden; }
.shortcuts { width: 76px; padding-top: 7px; color: #fff; }
.shortcuts li { display: flex; flex-direction: column; align-items: center; gap: 4px; height: 115px; }
.shortcuts svg { width: 48px; height: 48px; }

.remnant { position: absolute; left: 755px; top: 0; width: 7px; height: 22px; background: #b4b4b8; border-top: 2px solid #e4e4e4; }
.explorer { position: absolute; left: 129px; top: 22px; width: 800px; display: flex; background: #d4d0c8; }
.edge { width: 4px; height: 399px; }
.frame { flex: 1; min-width: 0; padding-bottom: 4px; }
.address { display: flex; align-items: center; height: 36px; border: 1px solid #808080; border-left-color: #fff; border-bottom: 2px solid #fff; padding: 2px 2px 0 74px; }
.address .down { margin: 0 5px 0 8px; }
.address span + .down { margin-left: 6px; }
.address input { margin-left: auto; width: 220px; height: 21px; border: 1px solid #fff; border-top: 2px solid #404040; font: inherit; padding: 0 4px; }
.search { width: 20px; height: 20px; margin-left: 1px; background: linear-gradient(#2048c8, #2c7cf0 60%, #50d8f8); border: 1px solid #7cc4f0; border-radius: 2px; }
.search svg { width: 18px; height: 18px; }
.down { display: inline-block; border: 4px solid transparent; border-top-color: #000; border-bottom: 0; }
.down.small { border-width: 3px; border-bottom-width: 0; }
.down.up { transform: rotate(180deg); }
.commands { display: flex; align-items: center; gap: 19px; height: 32px; padding-left: 12px; }
.commands button { white-space: nowrap; }
.commands button .down { margin-left: 6px; vertical-align: 1px; }
.commands .right { margin-left: auto; display: flex; gap: 12px; padding-right: 15px; }
.right button { display: flex; align-items: center; }
.commands .right .down { margin: 0 2px 0 13px; }
.body { display: flex; height: 274px; }
.tree { width: 141px; padding-top: 9px; overflow: hidden; background: #fff; }
.tree ul { margin-bottom: 20px; }
.tree li { display: flex; align-items: center; gap: 4px; height: 20px; padding-left: 20px; white-space: nowrap; }
.tree .child { padding-left: 30px; }
.tree .active { background: #d4d0c8; }
.scroll { width: 16px; display: flex; flex-direction: column; background: #eae8e3; }
.scroll button, .thumb { border: 1px solid; border-color: #fff #404040 #404040 #fff; box-shadow: inset -1px -1px #808080; background: #d4d0c8; }
.scroll button { display: flex; align-items: center; justify-content: center; height: 16px; }
.thumb { height: 170px; }
.track { flex: 1; }
.files { flex: 1; min-width: 0; margin-left: 3px; padding-top: 4px; background: #fff; }
.files section { height: 76px; }
.files h2 { display: flex; align-items: center; height: 23px; padding: 0 7px; gap: 4px; }
.files h2::after { content: ""; flex: 1; height: 1px; background: #000; }
.item { display: flex; align-items: center; gap: 4px; margin-left: 14px; padding-left: 4px; width: 190px; height: 52px; line-height: 13px; }
.item > svg { width: 48px; height: 48px; }
.item > div { flex: 1; }
.item.selected { background: #d4d0c8; }
.selected .info { color: #fff; }
.bar { height: 12px; margin: 1px 0; background: #fff; }
.bar.full { background: #0a246a; }
.details { display: flex; align-items: center; gap: 12px; height: 53px; padding: 0 0 4px 16px; border-top: 5px solid #d4d0c8; background: #fff; }
.details svg { width: 48px; height: 48px; }
.details p { display: flex; height: 18px; align-items: center; white-space: nowrap; }
.details b { font-size: 12px; font-weight: normal; margin-right: 5px; }
.kind { width: 143px; }
.torn { position: absolute; left: 2px; top: 0; width: 260px; height: 35px; }
.torn-bottom { position: absolute; right: 0; bottom: 0; width: 160px; height: 5px; }

.dialog { position: absolute; padding: 2px; background: #d4d0c8; border: 1px solid; border-color: #d4d0c8 #404040 #404040 #d4d0c8; box-shadow: inset 1px 1px #fff, inset -1px -1px #808080; }
.props { left: 389px; top: 0; width: 367px; height: 491px; }
.sheet { height: 413px; margin: 19px 12px 0 6px; border: 1px solid; border-color: #fff #808080 #808080 #fff; }
.advanced { left: 393px; top: 22px; width: 357px; height: 357px; }
.perms { left: 408px; top: 38px; width: 367px; }
.caption { display: flex; align-items: center; gap: 2px; height: 18px; padding: 0 2px 0 1px; color: #fff; background: linear-gradient(90deg, #0a246a, #a6caf0); }
.caption.off { color: #d4d0c8; background: linear-gradient(90deg, #808080, #c0c0c0); }
.caption h2 { flex: 1; font-weight: bold; white-space: nowrap; }
.caption button { width: 16px; height: 14px; background: #d4d0c8; border: 1px solid; border-color: #fff #404040 #404040 #fff; box-shadow: inset -1px -1px #808080; }
.caption button svg { width: 12px; height: 10px; margin-left: 1px; }
.caption path { stroke-width: 2; }
.caption button path { stroke: #000; }
.content { padding: 7px 6px 6px; font-family: "Liberation Sans", sans-serif; }
.tab { position: relative; display: block; height: 22px; padding: 0 6px 0 7px; margin-bottom: -1px; border: 1px solid; border-color: #fff #404040 transparent #fff; border-radius: 3px 3px 0 0; box-shadow: inset -1px 0 #808080; background: #d4d0c8; }
.page { height: 359px; padding: 7px 14px 0; border: 1px solid; border-color: #fff #404040 #404040 #fff; box-shadow: inset -1px -1px #808080; }
.page label { display: block; height: 17px; padding-top: 1px; }
.listbox { height: 103px; margin-bottom: 7px; background: #fff; border: 1px solid; border-color: #808080 #fff #fff #808080; box-shadow: inset 1px 1px #404040; padding: 2px 1px 0 5px; }
.listbox li { display: flex; height: 17px; }
.listbox span { flex: 1; padding: 2px 2px 1px; background: #0a246a; color: #fff; }
.actions { display: flex; justify-content: flex-end; gap: 6px; }
.actions.bottom { padding-top: 5px; }
.btn { width: 75px; height: 24px; border: 1px solid; border-color: #fff #404040 #404040 #fff; box-shadow: inset -1px -1px #808080; background: #d4d0c8; }
.btn.default { border-color: #000; box-shadow: inset 1px 1px #fff, inset -1px -1px #404040, inset -2px -2px #808080; }
.btn:disabled { color: #808080; text-shadow: 1px 1px #fff; }
table { width: 100%; margin-top: 7px; border-collapse: collapse; table-layout: fixed; }
th, td { width: 60px; padding: 0; font-weight: normal; text-align: center; white-space: nowrap; }
thead th { height: 28px; padding-bottom: 2px; vertical-align: bottom; }
th.name { width: auto; text-align: left; vertical-align: top; }
tbody { border: 1px solid #000; background: #fff; }
tbody td { height: 18px; padding-right: 24px; }
tbody tr:first-child td { height: 22px; padding-top: 4px; }
tbody td.name { text-align: left; padding-left: 11px; padding-right: 0; }
.fill td { height: 79px; }
td input { display: block; appearance: none; width: 13px; height: 13px; margin: 0 0 0 auto; border: 2px solid #000; background: #fff; }
td input { margin-right: 10px; }
td input:checked::before { content: ""; display: block; width: 9px; height: 9px; background: #000; clip-path: polygon(10% 35%, 40% 60%, 90% 8%, 90% 38%, 40% 92%, 10% 65%); }
.page a { display: block; margin-top: 10px; color: #000080; }

.taskbar { display: flex; align-items: center; height: 44px; padding: 2px 2px 0; border-top: 1px solid #d4d0c8; box-shadow: inset 0 1px #fff; background: #d4d0c8; }
.start { display: flex; align-items: center; gap: 2px; width: 51px; height: 38px; border: 1px solid; border-color: #fff #404040 #404040 #fff; box-shadow: inset -1px -1px #808080; font-weight: bold; padding-left: 1px; }
.app { display: flex; align-items: center; justify-content: center; width: 46px; height: 38px; margin-left: 11px; }
.app.pressed { background: #fff; border: 1px solid; border-color: #404040 #fff #fff #404040; box-shadow: inset 1px 1px #808080, inset -4px 0 #d4d0c8; width: 47px; }
.app + .app { margin-left: 2px; }
.app.pressed + .app { margin-left: 5px; }
.ie { width: 32px; height: 32px; }
.ex { width: 36px; height: 32px; }
.wmp { width: 32px; height: 28px; }
.quick { margin-left: auto; }
.more { margin: 0 8px 22px 7px; font: bold 16px/16px "Liberation Sans", sans-serif; }
.lang { padding: 11px 5px 13px 0; border-right: 1px solid #808080; margin-right: 3px; font-size: 12px; }
.tray { display: flex; align-items: center; gap: 8px; height: 38px; padding: 0 2px 0 5px; border: 1px solid; border-color: #808080 #fff #fff #808080; }
.chev { width: 7px; height: 10px; margin-right: 2px; }
.tray time { margin-left: 4px; text-align: center; line-height: 16px; }
.status { display: flex; align-items: center; gap: 3px; height: 21px; justify-content: flex-end; background: #efefef; border-top: 1px solid #e4e4e4; font: 15px/20px "Noto Sans", sans-serif; }
.status span { padding: 0 10px 0 1px; }
.grip { width: 12px; height: 12px; align-self: flex-end; }
</style>
